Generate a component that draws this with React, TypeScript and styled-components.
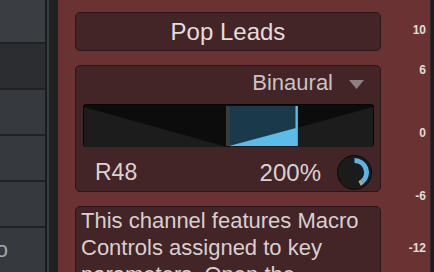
import React from "react";
import styled, { createGlobalStyle } from "styled-components";

const Global = createGlobalStyle`
  *, *::before, *::after { box-sizing: border-box; }
  html, body { margin: 0; padding: 0; background: #6b3234; }
  body { font-family: "Liberation Sans", Arial, sans-serif; }
`;

const Screen = styled.div`
  display: flex;
  width: 434px;
  height: 272px;
  overflow: hidden;
`;

const TrackList = styled.div`
  flex: none;
  width: 45px;
  display: flex;
  flex-direction: column;
  gap: 2px;
  background: #1f2124;
`;

const TrackRow = styled.div<{ $tone: string; $h?: number }>`
  flex: ${(p) => (p.$h ? "none" : "1")};
  height: ${(p) => (p.$h ? `${p.$h}px` : "auto")};
  background: ${(p) => p.$tone};
  display: flex;
  align-items: center;
  justify-content: flex-end;
  padding-right: 37px;
  overflow: hidden;
  white-space: nowrap;
  color: #a3a6aa;
  font-size: 22px;
`;

const Separator = styled.div`
  flex: none;
  width: 13px;
  background: linear-gradient(
    to right,
    #1b1d1f 0 2px,
    #3b3d40 2px 4px,
    #1f2123 4px
  );
`;

const RedArea = styled.div`
  flex: 1;
  display: flex;
  background: #6b3234;
`;

const PanelColumn = styled.div`
  flex: none;
  width: 306px;
  margin-left: 17px;
  padding-top: 12px;
  display: flex;
  flex-direction: column;
  gap: 14px;
`;

const Panel = styled.div`
  flex: none;
  background: #432427;
  border: 1px solid #2a1517;
  border-radius: 5px;
`;

const NamePanel = styled(Panel)`
  height: 39px;
  display: flex;
  align-items: center;
  justify-content: center;
  font-size: 24px;
  color: #e4dcdc;
`;

const WidthPanel = styled(Panel)`
  height: 127px;
  display: flex;
  flex-direction: column;
  padding: 4px 6px 0 7px;
`;

const ModeRow = styled.div`
  flex: none;
  height: 26px;
  display: flex;
  align-items: center;
  justify-content: flex-end;
  gap: 16px;
  padding-right: 10px;
  font-size: 22px;
  line-height: 26px;
  color: #cac2c2;
`;

const Caret = styled.svg`
  display: block;
  margin-top: 2px;
`;

const Bar = styled.div`
  flex: none;
  margin-top: 8px;
  height: 43px;
  border-radius: 4px;
  background: #0c0c0c;
  box-shadow: inset 0 0 0 1px #060606;
  overflow: hidden;
  svg {
    display: block;
  }
`;

const BottomRow = styled.div`
  flex: none;
  margin-top: 8px;
  height: 35px;
  display: flex;
  align-items: center;
  padding-left: 12px;
  padding-right: 2px;
`;

const Label = styled.span<{ $size: number }>`
  font-size: ${(p) => p.$size}px;
  color: #dad2d2;
`;

const Spacer = styled.div`
  flex: 1;
`;

const Knob = styled.svg`
  display: block;
  flex: none;
  margin-left: 16px;
`;

const TextPanel = styled(Panel)`
  height: 90px;
  padding: 0 8px 0 5px;
  font-size: 22px;
  line-height: 27px;
  color: #d8d0d0;
  overflow: hidden;
`;

const Scale = styled.div`
  position: relative;
  flex: 1;
`;

const Tick = styled.span<{ $y: number }>`
  position: absolute;
  right: 4px;
  top: ${(p) => p.$y - 7}px;
  font-size: 12px;
  line-height: 14px;
  font-weight: 700;
  color: #e2dada;
`;

const Edge = styled.div`
  flex: none;
  width: 4px;
  background: linear-gradient(to right, #2a2b2d 0 1px, #1c1d1f 1px);
`;

const ticks: [string, number][] = [
  ["10", 30],
  ["6", 70],
  ["0", 133],
  ["-6", 196],
  ["-12", 248],
];

const rows = [
  { tone: "#3a3d41", h: 42 },
  { tone: "#2b2d30", h: 44 },
  { tone: "#36393d", h: 44 },
  { tone: "#36393d", h: 44 },
  { tone: "#36393d", h: 44 },
];

function WidthMeter() {
  return (
    <svg width="291" height="43" viewBox="0 0 291 43">
      <polygon points="1,3 144,43 1,43" fill="#1c1c1c" />
      <polygon points="144,43 290,3 290,43" fill="#1c1c1c" />
      <rect x="143" y="2" width="72" height="40" fill="#1a3a4b" />
      <polygon points="146,42 213,24 213,42" fill="#5bbce7" />
      <rect x="143" y="2" width="3.5" height="40" fill="#3c3c3c" />
      <rect x="212.5" y="2" width="2.3" height="40" fill="#5bbde9" />
    </svg>
  );
}

export default function App() {
  return (
    <>
      <Global />
      <Screen>
        <TrackList>
          {rows.map((r, i) => (
            <TrackRow key={i} $tone={r.tone} $h={r.h} />
          ))}
          <TrackRow $tone="#36393d">Audio</TrackRow>
        </TrackList>
        <Separator />
        <RedArea>
          <PanelColumn>
            <NamePanel>Pop Leads</NamePanel>
            <WidthPanel>
              <ModeRow>
                <span>Binaural</span>
                <Caret width="15" height="9" viewBox="0 0 15 9">
                  <polygon points="0,0 15,0 7.5,9" fill="#8c8081" />
                </Caret>
              </ModeRow>
              <Bar>
                <WidthMeter />
              </Bar>
              <BottomRow>
                <Label $size={23}>R48</Label>
                <Spacer />
                <Label $size={24}>200%</Label>
                <Knob width="35" height="35" viewBox="0 0 35 35">
                  <circle cx="17.5" cy="17.5" r="17" fill="#1c1b1b" stroke="#0b0b0b" strokeWidth="1" />
                  <path
                    d="M17.5 5.5 A12 12 0 0 1 25.2 26.7"
                    fill="none"
                    stroke="#5ab5e5"
                    strokeWidth="5"
                  />
                  <path
                    d="M25.2 26.7 A12 12 0 0 1 22.6 28.4"
                    fill="none"
                    stroke="#a8a8a8"
                    strokeWidth="5"
                  />
                </Knob>
              </BottomRow>
            </WidthPanel>
            <TextPanel>
              This channel features Macro Controls assigned to key parameters. Open the Channel
              Editor to adjust them.
            </TextPanel>
          </PanelColumn>
          <Scale>
            {ticks.map(([t, y]) => (
              <Tick key={t} $y={y}>
                {t}
              </Tick>
            ))}
          </Scale>
          <Edge />
        </RedArea>
      </Screen>
    </>
  );
}
